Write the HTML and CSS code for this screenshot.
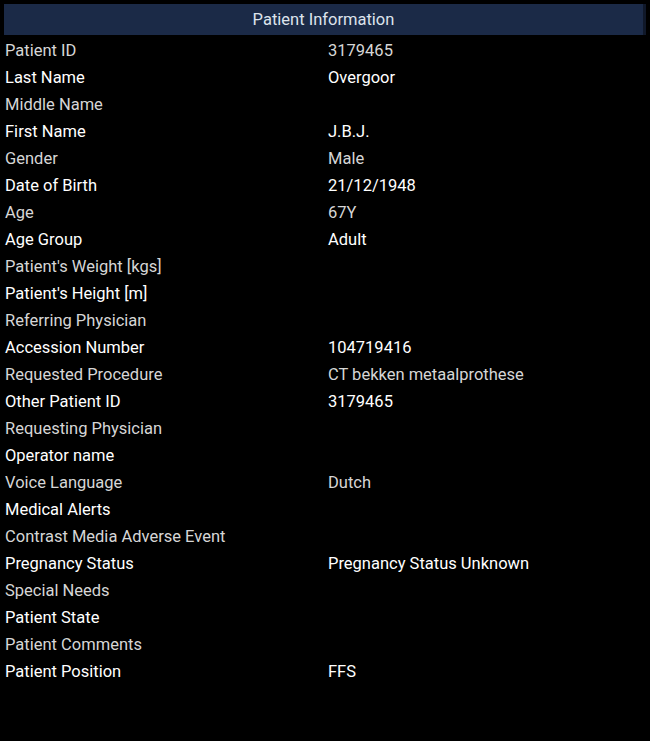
FILE: index.html
```html
<!DOCTYPE html>
<html>
<head>
<meta charset="utf-8">
<link rel="stylesheet" href="styles.css">
</head>
<body>
<div class="panel">
  <div class="header">Patient Information</div>
  <div class="rows">
    <div class="row odd"><span class="label">Patient ID</span><span class="value">3179465</span></div>
    <div class="row even"><span class="label">Last Name</span><span class="value">Overgoor</span></div>
    <div class="row odd"><span class="label">Middle Name</span><span class="value"></span></div>
    <div class="row even"><span class="label">First Name</span><span class="value">J.B.J.</span></div>
    <div class="row odd"><span class="label">Gender</span><span class="value">Male</span></div>
    <div class="row even"><span class="label">Date of Birth</span><span class="value">21/12/1948</span></div>
    <div class="row odd"><span class="label">Age</span><span class="value">67Y</span></div>
    <div class="row even"><span class="label">Age Group</span><span class="value">Adult</span></div>
    <div class="row odd"><span class="label">Patient's Weight [kgs]</span><span class="value"></span></div>
    <div class="row even"><span class="label">Patient's Height [m]</span><span class="value"></span></div>
    <div class="row odd"><span class="label">Referring Physician</span><span class="value"></span></div>
    <div class="row even"><span class="label">Accession Number</span><span class="value">104719416</span></div>
    <div class="row odd"><span class="label">Requested Procedure</span><span class="value">CT bekken metaalprothese</span></div>
    <div class="row even"><span class="label">Other Patient ID</span><span class="value">3179465</span></div>
    <div class="row odd"><span class="label">Requesting Physician</span><span class="value"></span></div>
    <div class="row even"><span class="label">Operator name</span><span class="value"></span></div>
    <div class="row odd"><span class="label">Voice Language</span><span class="value">Dutch</span></div>
    <div class="row even"><span class="label">Medical Alerts</span><span class="value"></span></div>
    <div class="row odd"><span class="label">Contrast Media Adverse Event</span><span class="value"></span></div>
    <div class="row even"><span class="label">Pregnancy Status</span><span class="value">Pregnancy Status Unknown</span></div>
    <div class="row odd"><span class="label">Special Needs</span><span class="value"></span></div>
    <div class="row even"><span class="label">Patient State</span><span class="value"></span></div>
    <div class="row odd"><span class="label">Patient Comments</span><span class="value"></span></div>
    <div class="row even"><span class="label">Patient Position</span><span class="value">FFS</span></div>
  </div>
</div>
</body>
</html>
```
FILE: styles.css
```css
html, body {
  margin: 0;
  padding: 0;
  background: #000;
  height: 100%;
}
body {
  font-family: "Roboto", "Liberation Sans", sans-serif;
  font-size: 16.5px;
  color: #fff;
}
.panel {
  padding: 4px 4px 0 4px;
}
.header {
  height: 31px;
  background: #1b2a47;
  color: #dde3ec;
  text-align: center;
  line-height: 31px;
  font-size: 16.5px;
  border-right: 3px solid #101829;
}
.rows {
  display: flex;
  flex-direction: column;
  padding-top: 2px;
}
.row {
  display: grid;
  grid-template-columns: 323px 1fr;
  height: 27px;
  line-height: 27px;
  padding-left: 1px;
}
.odd { color: #d6d6d6; }
.even { color: #ffffff; }
```
